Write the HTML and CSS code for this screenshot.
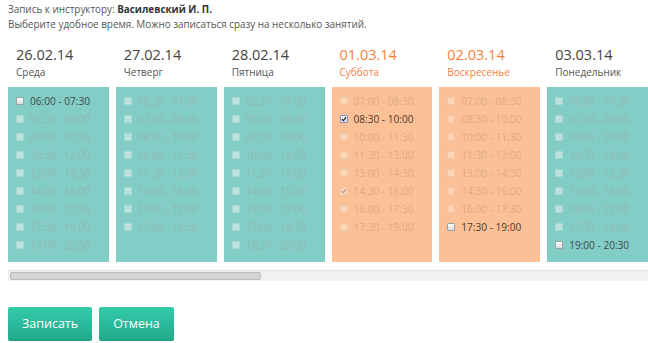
FILE: index.html
```html
<html>
<head>
    <link rel="stylesheet" href="styles.css">
</head>
<body>
    <div class="intro">
        <div>Запись к инструктору: <b>Василевский И. П.</b></div>
        <div>Выберите удобное время. Можно записаться сразу на несколько занятий.</div>
    </div>

    <div class="days">
        <div class="day">
            <div class="date">26.02.14</div>
            <div class="weekday">Среда</div>
            <div class="slots">
                <label class="slot"><span class="box"></span>06:00 - 07:30</label>
                <label class="slot off"><span class="box"></span>07:30 - 09:00</label>
                <label class="slot off"><span class="box"></span>09:00 - 10:30</label>
                <label class="slot off"><span class="box"></span>10:30 - 12:00</label>
                <label class="slot off"><span class="box"></span>12:00 - 13:30</label>
                <label class="slot off"><span class="box"></span>14:30 - 16:00</label>
                <label class="slot off"><span class="box"></span>16:00 - 17:30</label>
                <label class="slot off"><span class="box"></span>17:30 - 19:00</label>
                <label class="slot off"><span class="box"></span>19:00 - 20:30</label>
            </div>
        </div>
        <div class="day">
            <div class="date">27.02.14</div>
            <div class="weekday">Четверг</div>
            <div class="slots">
                <label class="slot off"><span class="box"></span>05:30 - 07:00</label>
                <label class="slot off"><span class="box"></span>07:00 - 08:30</label>
                <label class="slot off"><span class="box"></span>08:30 - 10:00</label>
                <label class="slot off"><span class="box"></span>10:00 - 11:30</label>
                <label class="slot off"><span class="box"></span>11:30 - 13:00</label>
                <label class="slot off"><span class="box"></span>14:00 - 15:30</label>
                <label class="slot off"><span class="box"></span>15:30 - 17:00</label>
                <label class="slot off"><span class="box"></span>17:00 - 18:30</label>
            </div>
        </div>
        <div class="day">
            <div class="date">28.02.14</div>
            <div class="weekday">Пятница</div>
            <div class="slots">
                <label class="slot off"><span class="box"></span>05:30 - 07:00</label>
                <label class="slot off"><span class="box"></span>07:00 - 08:30</label>
                <label class="slot off"><span class="box"></span>08:30 - 10:00</label>
                <label class="slot off"><span class="box"></span>10:00 - 11:30</label>
                <label class="slot off"><span class="box"></span>11:30 - 13:00</label>
                <label class="slot off"><span class="box"></span>14:00 - 15:30</label>
                <label class="slot off"><span class="box"></span>15:30 - 17:00</label>
                <label class="slot off"><span class="box"></span>17:00 - 18:30</label>
                <label class="slot off"><span class="box"></span>18:30 - 20:00</label>
            </div>
        </div>
        <div class="day weekend">
            <div class="date">01.03.14</div>
            <div class="weekday">Суббота</div>
            <div class="slots">
                <label class="slot off"><span class="box"></span>07:00 - 08:30</label>
                <label class="slot checked"><span class="box"><svg viewBox="0 0 8 8"><path d="M1.3 4.2 L3.2 6.2 L6.8 1.6" /></svg></span>08:30 - 10:00</label>
                <label class="slot off"><span class="box"></span>10:00 - 11:30</label>
                <label class="slot off"><span class="box"></span>11:30 - 13:00</label>
                <label class="slot off"><span class="box"></span>13:00 - 14:30</label>
                <label class="slot off checked"><span class="box"><svg viewBox="0 0 8 8"><path d="M1.3 4.2 L3.2 6.2 L6.8 1.6" /></svg></span>14:30 - 16:00</label>
                <label class="slot off"><span class="box"></span>16:00 - 17:30</label>
                <label class="slot off"><span class="box"></span>17:30 - 19:00</label>
            </div>
        </div>
        <div class="day weekend">
            <div class="date">02.03.14</div>
            <div class="weekday">Воскресенье</div>
            <div class="slots">
                <label class="slot off"><span class="box"></span>07:00 - 08:30</label>
                <label class="slot off"><span class="box"></span>08:30 - 10:00</label>
                <label class="slot off"><span class="box"></span>10:00 - 11:30</label>
                <label class="slot off"><span class="box"></span>11:30 - 13:00</label>
                <label class="slot off"><span class="box"></span>13:00 - 14:30</label>
                <label class="slot off"><span class="box"></span>14:30 - 16:00</label>
                <label class="slot off"><span class="box"></span>16:00 - 17:30</label>
                <label class="slot"><span class="box"></span>17:30 - 19:00</label>
            </div>
        </div>
        <div class="day">
            <div class="date">03.03.14</div>
            <div class="weekday">Понедельник</div>
            <div class="slots">
                <label class="slot off"><span class="box"></span>06:00 - 07:30</label>
                <label class="slot off"><span class="box"></span>07:30 - 09:00</label>
                <label class="slot off"><span class="box"></span>09:00 - 10:30</label>
                <label class="slot off"><span class="box"></span>10:30 - 12:00</label>
                <label class="slot off"><span class="box"></span>12:00 - 13:30</label>
                <label class="slot off"><span class="box"></span>14:30 - 16:00</label>
                <label class="slot off"><span class="box"></span>16:00 - 17:30</label>
                <label class="slot off"><span class="box"></span>17:30 - 19:00</label>
                <label class="slot"><span class="box"></span>19:00 - 20:30</label>
            </div>
        </div>
    </div>

    <div class="scroll-track">
        <div class="scroll-thumb"></div>
    </div>

    <div class="actions">
        <button class="btn">Записать</button>
        <button class="btn">Отмена</button>
    </div>
</body>
</html>
```
FILE: styles.css
```css
body {
    margin: 0;
    padding: 2px 0 0 8px;
    background-color: #fff;
    color: #555;
    font-family: "Open Sans", Arial, sans-serif;
    overflow: hidden;
}

.intro {
    font-size: 9.9px;
    line-height: 15px;
    color: #555;
}

.intro b {
    color: #333;
}

.days {
    width: 640px;
    margin-top: 13px;
    display: grid;
    grid-template-columns: repeat(6, 1fr);
    column-gap: 7px;
}

.day {
    display: flex;
    flex-direction: column;
}

.date {
    font-size: 14.5px;
    line-height: 20px;
    color: #444;
    padding-left: 8px;
}

.weekday {
    font-size: 10px;
    line-height: 15px;
    color: #555;
    padding-left: 8px;
}

.weekend .date,
.weekend .weekday {
    color: #f6813f;
}

.slots {
    margin-top: 7px;
    height: 175px;
    box-sizing: border-box;
    padding: 5px 0 0 8px;
    background-color: #82cdc6;
}

.weekend .slots {
    background-color: #fcc096;
}

.slot {
    display: flex;
    align-items: center;
    height: 18px;
    font-size: 10.1px;
    color: #3d4a49;
}

.weekend .slot {
    color: #4f3a2c;
}

.slot.off {
    color: #93b8b4;
}

.weekend .slot.off {
    color: #dcac8a;
}

.box {
    width: 6px;
    height: 6px;
    margin-right: 6px;
    border: 1px solid #9aa3a2;
    border-radius: 1px;
    background: linear-gradient(#ffffff, #dcdcdc);
    display: flex;
}

.slot.off .box {
    border-color: #a9d6d1;
    background: #bde2de;
}

.weekend .slot.off .box {
    border-color: #efc8ab;
    background: #fdd4b6;
}

.box svg {
    width: 6px;
    height: 6px;
}

.box path {
    fill: none;
    stroke: #222;
    stroke-width: 1.6;
}

.slot.checked .box {
    border-color: #8a93c4;
    background: linear-gradient(#f4f4f8, #d6d8e4);
}

.slot.off.checked .box path {
    stroke: #c59a7d;
}

.scroll-track {
    width: 640px;
    height: 9px;
    margin-top: 8px;
    border-top: 1px solid #e4e4e4;
    background-color: #f1f1f1;
    padding-top: 1px;
}

.scroll-thumb {
    width: 249px;
    height: 6px;
    margin-left: 2px;
    border: 1px solid #bcbcbc;
    border-radius: 2px;
    background-color: #d5d5d5;
}

.actions {
    margin-top: 26px;
    display: flex;
    gap: 7px;
}

.btn {
    height: 34px;
    padding: 0 14px;
    font-family: "Open Sans", Arial, sans-serif;
    font-size: 12.5px;
    color: #fff;
    border: none;
    border-bottom: 1px solid #1f9a80;
    border-radius: 2px;
    background: linear-gradient(#33cbab, #23aa8c);
    cursor: pointer;
}

.btn:hover {
    opacity: 0.8;
}
```
